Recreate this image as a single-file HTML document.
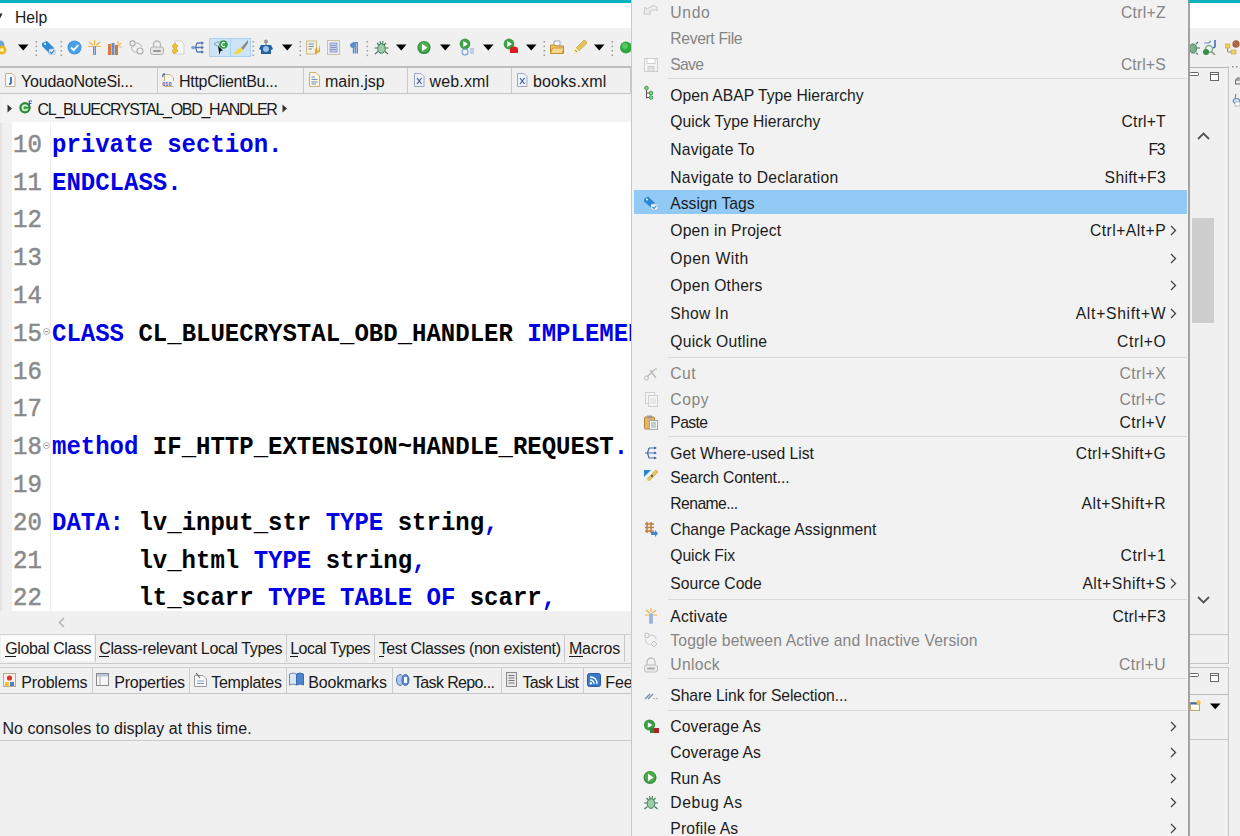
<!DOCTYPE html>
<html><head><meta charset="utf-8">
<style>
*{margin:0;padding:0;box-sizing:border-box}
html,body{width:1240px;height:836px;overflow:hidden;background:#f0f0f0;font-family:"Liberation Sans",sans-serif;color:#1a1a1a;position:relative}
.a{position:absolute}
.t{position:absolute;white-space:pre}
.m{position:absolute;white-space:pre;font-family:"Liberation Mono",monospace}
.k{color:#0000e6}
</style></head><body>

<div class="a" style="left:0px;top:0px;width:1240px;height:3px;background:#0ab3bf;"></div>
<div class="a" style="left:0px;top:3px;width:1240px;height:25px;background:#ffffff;"></div>
<svg class="a" style="left:0px;top:12px" width="6" height="8" viewBox="0 0 6 8"><path d="M-3 1.5 L2.5 1.5 L-0.25 7 Z" fill="#223"/></svg>
<div class="t" style="top:8.15px;font-size:15.7px;line-height:19.62px;color:#1a1a1a;left:15px;">Help</div>
<div class="a" style="left:0px;top:28px;width:1240px;height:38px;background:#f0f0f0;"></div>
<div class="a" style="left:209px;top:38px;width:42px;height:19px;background:#cde4f7;border:1px solid #a9d1f3"></div>
<div class="a" style="left:230px;top:38px;width:1px;height:19px;background:#a9d1f3;"></div>
<svg class="a" style="left:-6px;top:40px" width="14" height="15" viewBox="0 0 14 15"><circle cx="6" cy="5" r="4.5" fill="#6aa6d8"/><circle cx="8" cy="10" r="4.5" fill="#e8b623"/><circle cx="8" cy="10" r="2" fill="#fff3b0"/></svg>
<svg class="a" style="left:18px;top:44px" width="11" height="7" viewBox="0 0 11 7"><path d="M0 0.5 L10.5 0.5 L5.25 6.5 Z" fill="#000"/></svg>
<svg class="a" style="left:35px;top:39.5px" width="3" height="20" viewBox="0 0 3 20"><rect x="0.5" y="1.0" width="1.6" height="1.6" fill="#a0a0a0"/><rect x="0.5" y="5.5" width="1.6" height="1.6" fill="#a0a0a0"/><rect x="0.5" y="10.0" width="1.6" height="1.6" fill="#a0a0a0"/><rect x="0.5" y="14.5" width="1.6" height="1.6" fill="#a0a0a0"/></svg>
<svg class="a" style="left:41px;top:40px" width="15" height="15" viewBox="0 0 15 15"><path d="M1 3 L6 1 L13 8 L8 13 L1 6 Z" fill="#2f8bd6"/><circle cx="4" cy="4" r="1" fill="#fff"/><rect x="8" y="9" width="6" height="6" rx="1" fill="#e6eef6" stroke="#9ab" stroke-width=".6"/><path d="M9 12 L10.5 13.5 L13 10.5" stroke="#2f8bd6" stroke-width="1.2" fill="none"/></svg>
<svg class="a" style="left:60px;top:39.5px" width="3" height="20" viewBox="0 0 3 20"><rect x="0.5" y="1.0" width="1.6" height="1.6" fill="#a0a0a0"/><rect x="0.5" y="5.5" width="1.6" height="1.6" fill="#a0a0a0"/><rect x="0.5" y="10.0" width="1.6" height="1.6" fill="#a0a0a0"/><rect x="0.5" y="14.5" width="1.6" height="1.6" fill="#a0a0a0"/></svg>
<svg class="a" style="left:67px;top:40px" width="15" height="15" viewBox="0 0 15 15"><circle cx="7.5" cy="7.5" r="7" fill="#3f92dc"/><circle cx="7.5" cy="7.5" r="6.2" fill="#4aa0e6"/><path d="M4 7.5 L6.7 10.2 L11.3 5" stroke="#fff" stroke-width="1.8" fill="none"/></svg>
<svg class="a" style="left:88px;top:40px" width="13" height="15" viewBox="0 0 13 15"><path d="M6.5 0 V5 M1 2 L5 5.5 M12 2 L8 5.5 M0 6.5 H4.5 M13 6.5 H8.5" stroke="#f2b540" stroke-width="1.2"/><rect x="5" y="6" width="3" height="9" fill="#5f7fbf"/><rect x="5.8" y="6" width="1.4" height="9" fill="#a8c0e8"/></svg>
<svg class="a" style="left:108px;top:40px" width="15" height="15" viewBox="0 0 15 15"><rect x="0" y="4" width="3" height="11" fill="#d9783a"/><rect x="3.5" y="3" width="3" height="12" fill="#6b8dc8"/><rect x="7" y="5" width="3" height="10" fill="#c8793c"/><path d="M10 1 V5 M13 3 L10.5 6 M14 7 H11" stroke="#f2b540" stroke-width="1.1"/></svg>
<svg class="a" style="left:129px;top:40px" width="15" height="15" viewBox="0 0 15 15"><circle cx="3.5" cy="3.5" r="2.6" fill="none" stroke="#aaa" stroke-width="1.1"/><circle cx="11" cy="11" r="3" fill="none" stroke="#aaa" stroke-width="1.1"/><path d="M6.5 3 Q12 3 12.5 7 M2.5 7 Q2.5 12 7.5 12.5" stroke="#b5b5b5" fill="none" stroke-width="1"/></svg>
<svg class="a" style="left:150px;top:40px" width="14" height="15" viewBox="0 0 14 15"><path d="M3.5 7 V4.5 A3.5 3.5 0 0 1 10.5 4.5 V7" stroke="#b8b8b8" stroke-width="1.3" fill="none"/><rect x="0.5" y="7" width="13" height="7.5" rx="2" fill="#e6e6e6" stroke="#b0b0b0" stroke-width="1"/><rect x="3" y="10" width="8" height="2" rx="1" fill="#999"/></svg>
<svg class="a" style="left:171px;top:40px" width="14" height="15" viewBox="0 0 14 15"><path d="M4 1 H10 L13 4 V14 H4 Z" fill="#fafafa" stroke="#cfcfcf"/><path d="M1 6 L4 3 L7 6 L5 8 L7 11 L3 14 L1 11 L3 8.5 Z" fill="#f0c23a" stroke="#d49a20" stroke-width=".7"/></svg>
<svg class="a" style="left:191px;top:40px" width="14" height="15" viewBox="0 0 14 15"><path d="M6 3 H12 M1 7.5 H12 M6 12 H12 M4.5 7.5 L6 3 M4.5 7.5 L6 12" stroke="#5778b2" stroke-width="1.3" fill="none"/><path d="M10.5 1 L13 3 L10.5 5 Z M10.5 5.5 L13 7.5 L10.5 9.5 Z M10.5 10 L13 12 L10.5 14 Z" fill="#5778b2"/><circle cx="2" cy="7.5" r="1.8" fill="#7aa3d8"/></svg>
<svg class="a" style="left:213px;top:40px" width="15" height="15" viewBox="0 0 15 15"><path d="M1 4 L4 2 L8 2 L8 6 L4 6 Z" fill="none" stroke="#7a94b0" stroke-width=".9"/><path d="M5 6 L10 10.5 L7.5 11 L6.5 15 L5 6 Z" fill="#111"/><circle cx="10.5" cy="4.5" r="4.3" fill="#2a9d3e"/><path d="M12 3 A2 2 0 1 0 12 6" stroke="#fff" stroke-width="1.2" fill="none"/></svg>
<svg class="a" style="left:234px;top:40px" width="15" height="15" viewBox="0 0 15 15"><path d="M14 0 L7 8 L9 10 L14 3 Z" fill="#8b8b78"/><path d="M7 8 Q2 9 0 14 Q6 15 9 10 Z" fill="#f4d84a"/></svg>
<svg class="a" style="left:252px;top:39.5px" width="3" height="20" viewBox="0 0 3 20"><rect x="0.5" y="1.0" width="1.6" height="1.6" fill="#a0a0a0"/><rect x="0.5" y="5.5" width="1.6" height="1.6" fill="#a0a0a0"/><rect x="0.5" y="10.0" width="1.6" height="1.6" fill="#a0a0a0"/><rect x="0.5" y="14.5" width="1.6" height="1.6" fill="#a0a0a0"/></svg>
<svg class="a" style="left:259px;top:39px" width="14" height="16" viewBox="0 0 14 16"><circle cx="7" cy="2.5" r="2" fill="#999"/><rect x="6.4" y="3" width="1.2" height="3" fill="#888"/><path d="M2 6 L12 6 L14 10 L12 11 V15 H2 V11 L0 10 Z" fill="#22609e"/><circle cx="7" cy="10" r="3" fill="#9cc4ec"/></svg>
<svg class="a" style="left:282px;top:44px" width="11" height="7" viewBox="0 0 11 7"><path d="M0 0.5 L10.5 0.5 L5.25 6.5 Z" fill="#000"/></svg>
<svg class="a" style="left:299px;top:39.5px" width="3" height="20" viewBox="0 0 3 20"><rect x="0.5" y="1.0" width="1.6" height="1.6" fill="#a0a0a0"/><rect x="0.5" y="5.5" width="1.6" height="1.6" fill="#a0a0a0"/><rect x="0.5" y="10.0" width="1.6" height="1.6" fill="#a0a0a0"/><rect x="0.5" y="14.5" width="1.6" height="1.6" fill="#a0a0a0"/></svg>
<svg class="a" style="left:306px;top:40px" width="15" height="15" viewBox="0 0 15 15"><rect x="0.5" y="1" width="10" height="13" fill="#f4f0e0" stroke="#c8b98a"/><path d="M2.5 4 H8 M2.5 6.5 H8 M2.5 9 H6" stroke="#7a8ab8" stroke-width="1"/><path d="M9 14 L9 9 L11 7 L12 12 L14 4 L14 12 Z" fill="#e8a92b"/></svg>
<svg class="a" style="left:327px;top:40px" width="13" height="15" viewBox="0 0 13 15"><rect x="0.5" y="0.5" width="12" height="14" fill="#eef0f6" stroke="#c9c1a0"/><rect x="3" y="3" width="7" height="9" fill="#c6d0ea" stroke="#8190c0" stroke-width=".8"/><path d="M4 5.5 H9 M4 7.5 H9 M4 9.5 H9" stroke="#6b7cb5" stroke-width=".7"/></svg>
<svg class="a" style="left:350px;top:42px" width="8" height="12" viewBox="0 0 8 12"><path d="M3.5 11.5 V0.8 H7.5 V11.5 M5.5 0.8 V11.5" stroke="#5b8dcf" stroke-width="1.5" fill="none"/><circle cx="2.8" cy="3.3" r="2.6" fill="#5b8dcf"/></svg>
<svg class="a" style="left:366px;top:39.5px" width="3" height="20" viewBox="0 0 3 20"><rect x="0.5" y="1.0" width="1.6" height="1.6" fill="#a0a0a0"/><rect x="0.5" y="5.5" width="1.6" height="1.6" fill="#a0a0a0"/><rect x="0.5" y="10.0" width="1.6" height="1.6" fill="#a0a0a0"/><rect x="0.5" y="14.5" width="1.6" height="1.6" fill="#a0a0a0"/></svg>
<svg class="a" style="left:374px;top:40px" width="15" height="15" viewBox="0 0 15 15"><ellipse cx="7.5" cy="8.5" rx="3.8" ry="4.8" fill="#9ccca8" stroke="#3f7a57" stroke-width="1"/><path d="M3 3 L5 5 M12 3 L10 5 M0.5 8 H3.5 M11.5 8 H14.5 M1 14 L4 11.5 M14 14 L11 11.5 M6 1 L6.5 4 M9 1 L8.5 4" stroke="#3f7a57" stroke-width="1.1"/></svg>
<svg class="a" style="left:396px;top:44px" width="11" height="7" viewBox="0 0 11 7"><path d="M0 0.5 L10.5 0.5 L5.25 6.5 Z" fill="#000"/></svg>
<svg class="a" style="left:417px;top:40px" width="14" height="15" viewBox="0 0 14 15"><circle cx="7" cy="7.5" r="6.6" fill="#2e8b3a"/><circle cx="7" cy="7" r="5.5" fill="#4aac4a"/><path d="M5 3.8 L10.5 7.5 L5 11.2 Z" fill="#fff"/></svg>
<svg class="a" style="left:440px;top:44px" width="11" height="7" viewBox="0 0 11 7"><path d="M0 0.5 L10.5 0.5 L5.25 6.5 Z" fill="#000"/></svg>
<svg class="a" style="left:459px;top:38px" width="16" height="18" viewBox="0 0 16 18"><circle cx="6" cy="6" r="5.4" fill="#3f9e46"/><path d="M4.3 3 L9 6 L4.3 9 Z" fill="#fff"/><circle cx="6" cy="14" r="3" fill="none" stroke="#6f9fd8" stroke-width="1.1"/><path d="M11 11 H15 M11 13 H15 M11 15 H15" stroke="#8aaed8" stroke-width="1"/></svg>
<svg class="a" style="left:483px;top:44px" width="11" height="7" viewBox="0 0 11 7"><path d="M0 0.5 L10.5 0.5 L5.25 6.5 Z" fill="#000"/></svg>
<svg class="a" style="left:503px;top:38px" width="15" height="17" viewBox="0 0 15 17"><circle cx="6" cy="6" r="5.4" fill="#3f9e46"/><path d="M4.3 3 L9 6 L4.3 9 Z" fill="#fff"/><path d="M7 11 Q7 8.5 11 8.5 Q15 8.5 15 11 V15 H7 Z" fill="#d82020"/></svg>
<svg class="a" style="left:526px;top:44px" width="11" height="7" viewBox="0 0 11 7"><path d="M0 0.5 L10.5 0.5 L5.25 6.5 Z" fill="#000"/></svg>
<svg class="a" style="left:543px;top:39.5px" width="3" height="20" viewBox="0 0 3 20"><rect x="0.5" y="1.0" width="1.6" height="1.6" fill="#a0a0a0"/><rect x="0.5" y="5.5" width="1.6" height="1.6" fill="#a0a0a0"/><rect x="0.5" y="10.0" width="1.6" height="1.6" fill="#a0a0a0"/><rect x="0.5" y="14.5" width="1.6" height="1.6" fill="#a0a0a0"/></svg>
<svg class="a" style="left:550px;top:40px" width="14" height="15" viewBox="0 0 14 15"><path d="M4 1 H10 V6 H4 Z" fill="#fff" stroke="#7a94b0" stroke-width=".8"/><path d="M0.5 5 H5 L6 6 H13.5 V13.5 H0.5 Z" fill="#f4c56a" stroke="#c18a2a"/><path d="M0.5 13.5 L2.5 8 H14 L12 13.5 Z" fill="#f9d98f" stroke="#c18a2a" stroke-width=".8"/></svg>
<svg class="a" style="left:572px;top:40px" width="15" height="15" viewBox="0 0 15 15"><path d="M14 1 L12 0 L4 8 L7 11 L15 3 Z" fill="#e5c35b" stroke="#b89a3a" stroke-width=".6"/><path d="M4 8 L1 11 L4 14 L7 11 Z" fill="#f5f0a0"/><path d="M3 10 L5 12" stroke="#888" stroke-width="1"/></svg>
<svg class="a" style="left:594px;top:44px" width="11" height="7" viewBox="0 0 11 7"><path d="M0 0.5 L10.5 0.5 L5.25 6.5 Z" fill="#000"/></svg>
<svg class="a" style="left:611px;top:39.5px" width="3" height="20" viewBox="0 0 3 20"><rect x="0.5" y="1.0" width="1.6" height="1.6" fill="#a0a0a0"/><rect x="0.5" y="5.5" width="1.6" height="1.6" fill="#a0a0a0"/><rect x="0.5" y="10.0" width="1.6" height="1.6" fill="#a0a0a0"/><rect x="0.5" y="14.5" width="1.6" height="1.6" fill="#a0a0a0"/></svg>
<svg class="a" style="left:619px;top:40px" width="13" height="15" viewBox="0 0 13 15"><circle cx="7" cy="7.5" r="6" fill="#2fa83f"/><circle cx="6" cy="6" r="3" fill="#55c763"/></svg>
<svg class="a" style="left:1190px;top:40px" width="10" height="15" viewBox="0 0 10 15"><ellipse cx="3" cy="8.5" rx="3.5" ry="4.5" fill="#7db08a" stroke="#3f7a57"/><path d="M7 8 H10 M6 4 L8 2 M6 13 L8 14.5" stroke="#3f7a57" stroke-width="1.1"/></svg>
<svg class="a" style="left:1203px;top:40px" width="14" height="15" viewBox="0 0 14 15"><path d="M1 3 H6 L8 1" stroke="#6b8cc8" stroke-width="1.2" fill="none"/><path d="M12 0 V6 Q12 8 9 8" stroke="#3f6fc0" stroke-width="1.6" fill="none"/><circle cx="6" cy="9" r="3.5" fill="none" stroke="#8a8" stroke-width="1.4"/><path d="M8.5 11.5 L12 15" stroke="#9a8a8a" stroke-width="1.6"/><circle cx="3" cy="12" r="3" fill="#2f8f4a"/></svg>
<svg class="a" style="left:1225px;top:40px" width="15" height="15" viewBox="0 0 15 15"><rect x="0" y="4" width="5" height="4" fill="#f0d060" stroke="#c8a030" stroke-width=".6"/><rect x="6" y="10" width="5" height="4" fill="#f0d060" stroke="#c8a030" stroke-width=".6"/><path d="M2.5 8 V12 H6" stroke="#888" fill="none"/><ellipse cx="11" cy="4" rx="3.6" ry="3.8" fill="#a5613a"/><path d="M9 2 Q11 4 13 6" stroke="#d89a70" stroke-width=".8" fill="none"/></svg>
<div class="a" style="left:0px;top:66px;width:631px;height:28px;background:#f0f0f0;border-top:2px solid #bdbdbd;border-bottom:1px solid #c6c6c6"></div>
<div class="a" style="left:157px;top:68px;width:1px;height:25px;background:#c9c9c9;"></div>
<div class="a" style="left:303px;top:68px;width:1px;height:25px;background:#c9c9c9;"></div>
<div class="a" style="left:407px;top:68px;width:1px;height:25px;background:#c9c9c9;"></div>
<div class="a" style="left:511px;top:68px;width:1px;height:25px;background:#c9c9c9;"></div>
<div class="a" style="left:630px;top:68px;width:1px;height:25px;background:#c9c9c9;"></div>
<svg class="a" style="left:5px;top:73px" width="11" height="14" viewBox="0 0 11 14"><path d="M0.5 0.5 H7 L10 3.5 V13.5 H0.5 Z" fill="#f7f7f7" stroke="#c4b48a"/><path d="M6 4 V9.5 Q6 11 4 11" stroke="#2a5aa8" stroke-width="1.6" fill="none"/></svg>
<div class="t" style="top:72.36px;font-size:16px;line-height:20.0px;color:#1a1a1a;left:21px;letter-spacing:-0.200px;">YoudaoNoteSi...</div>
<svg class="a" style="left:161px;top:73px" width="15" height="14" viewBox="0 0 15 14"><path d="M3.5 1.5 H9 L12.5 5 V13.5 H3.5 Z" fill="#fbf8ee" stroke="#c9b27a"/><path d="M4 1 Q1 1 2 4" stroke="#3a6ab0" stroke-width="1.3" fill="none"/><rect x="1" y="8" width="13" height="5" fill="#eef2fa"/><text x="1.3" y="12.8" font-size="5.5" font-weight="bold" font-family="Liberation Sans" fill="#2a5aa8">010</text></svg>
<div class="t" style="top:72.36px;font-size:16px;line-height:20.0px;color:#1a1a1a;left:179px;letter-spacing:-0.300px;">HttpClientBu...</div>
<svg class="a" style="left:309px;top:72px" width="11" height="15" viewBox="0 0 11 15"><path d="M0.5 0.5 H7 L10.5 4 V14.5 H0.5 Z" fill="#fbf6e0" stroke="#c9b27a"/><path d="M2.5 5 H6 M2.5 7.5 H8.5 M2.5 10 H8.5 M2.5 12 H7" stroke="#6f8fc8" stroke-width="1"/></svg>
<div class="t" style="top:72.36px;font-size:16px;line-height:20.0px;color:#1a1a1a;left:325px;">main.jsp</div>
<svg class="a" style="left:414px;top:73px" width="11" height="14" viewBox="0 0 11 14"><path d="M0.5 0.5 H7 L10 3.5 V13.5 H0.5 Z" fill="#eef2fa" stroke="#9aa8c8"/><path d="M3 5 L7.5 11 M7.5 5 L3 11" stroke="#3a5a9a" stroke-width="1.2"/></svg>
<div class="t" style="top:72.36px;font-size:16px;line-height:20.0px;color:#1a1a1a;left:429.5px;letter-spacing:0.150px;">web.xml</div>
<svg class="a" style="left:517px;top:73px" width="11" height="14" viewBox="0 0 11 14"><path d="M0.5 0.5 H7 L10 3.5 V13.5 H0.5 Z" fill="#eef2fa" stroke="#9aa8c8"/><path d="M3 5 L7.5 11 M7.5 5 L3 11" stroke="#3a5a9a" stroke-width="1.2"/></svg>
<div class="t" style="top:72.36px;font-size:16px;line-height:20.0px;color:#1a1a1a;left:533px;letter-spacing:0.150px;">books.xml</div>
<div class="a" style="left:0px;top:94px;width:631px;height:29px;background:#f0f0f0;"></div>
<div class="a" style="left:2px;top:95px;width:629px;height:28px;background:#f3f3f3;"></div>
<svg class="a" style="left:7px;top:104px" width="6" height="9" viewBox="0 0 6 9"><path d="M0.5 0.5 L5 4.5 L0.5 8.5 Z" fill="#333"/></svg>
<svg class="a" style="left:19px;top:100px" width="14" height="14" viewBox="0 0 14 14"><circle cx="6" cy="7.8" r="4.6" fill="#c8f0c8" stroke="#2a8a3a" stroke-width="2.2"/><circle cx="6" cy="7.8" r="1.5" fill="#3a9a4a"/><rect x="7" y="6.8" width="4" height="1.6" fill="#2a8a3a"/><path d="M10.3 6 V1 H13 M10.3 3.5 H12.5" stroke="#3a5aa8" stroke-width="1.2" fill="none"/></svg>
<div class="t" style="top:100.36px;font-size:16px;line-height:20.0px;color:#1a1a1a;left:37.5px;letter-spacing:-1.280px;">CL_BLUECRYSTAL_OBD_HANDLER</div>
<svg class="a" style="left:282px;top:104px" width="6" height="9" viewBox="0 0 6 9"><path d="M0.5 0.5 L5 4.5 L0.5 8.5 Z" fill="#333"/></svg>
<div class="a" style="left:0px;top:123px;width:12px;height:510px;background:#f0f0f0;"></div>
<div class="a" style="left:0px;top:123px;width:2px;height:510px;background:#e4e4e4;"></div>
<div class="a" style="left:12px;top:122px;width:619px;height:489px;background:#ffffff;"></div>
<div class="a" style="left:50px;top:122px;width:1px;height:489px;background:#f0f0f0;"></div>
<div class="m" style="left:13px;top:131.81px;font-size:24px;line-height:28px;color:#8a8a8a;-webkit-text-stroke:0.5px #8a8a8a;transform:scaleY(1.09);transform-origin:0 20.39px;">10</div>
<div class="m" style="left:52px;top:131.81px;font-size:24px;line-height:28px;color:#000;font-weight:bold;transform:scaleY(1.09);transform-origin:0 20.39px;"><span class="k">private section.</span></div>
<div class="m" style="left:13px;top:169.61px;font-size:24px;line-height:28px;color:#8a8a8a;-webkit-text-stroke:0.5px #8a8a8a;transform:scaleY(1.09);transform-origin:0 20.39px;">11</div>
<div class="m" style="left:52px;top:169.61px;font-size:24px;line-height:28px;color:#000;font-weight:bold;transform:scaleY(1.09);transform-origin:0 20.39px;"><span class="k">ENDCLASS.</span></div>
<div class="m" style="left:13px;top:207.41px;font-size:24px;line-height:28px;color:#8a8a8a;-webkit-text-stroke:0.5px #8a8a8a;transform:scaleY(1.09);transform-origin:0 20.39px;">12</div>
<div class="m" style="left:13px;top:245.21px;font-size:24px;line-height:28px;color:#8a8a8a;-webkit-text-stroke:0.5px #8a8a8a;transform:scaleY(1.09);transform-origin:0 20.39px;">13</div>
<div class="m" style="left:13px;top:283.01px;font-size:24px;line-height:28px;color:#8a8a8a;-webkit-text-stroke:0.5px #8a8a8a;transform:scaleY(1.09);transform-origin:0 20.39px;">14</div>
<div class="m" style="left:13px;top:320.81px;font-size:24px;line-height:28px;color:#8a8a8a;-webkit-text-stroke:0.5px #8a8a8a;transform:scaleY(1.09);transform-origin:0 20.39px;">15</div>
<div class="m" style="left:52px;top:320.81px;font-size:24px;line-height:28px;color:#000;font-weight:bold;transform:scaleY(1.09);transform-origin:0 20.39px;"><span class="k">CLASS</span> CL_BLUECRYSTAL_OBD_HANDLER <span class="k">IMPLEMENTATION.</span></div>
<div class="m" style="left:13px;top:358.61px;font-size:24px;line-height:28px;color:#8a8a8a;-webkit-text-stroke:0.5px #8a8a8a;transform:scaleY(1.09);transform-origin:0 20.39px;">16</div>
<div class="m" style="left:13px;top:396.41px;font-size:24px;line-height:28px;color:#8a8a8a;-webkit-text-stroke:0.5px #8a8a8a;transform:scaleY(1.09);transform-origin:0 20.39px;">17</div>
<div class="m" style="left:13px;top:434.21px;font-size:24px;line-height:28px;color:#8a8a8a;-webkit-text-stroke:0.5px #8a8a8a;transform:scaleY(1.09);transform-origin:0 20.39px;">18</div>
<div class="m" style="left:52px;top:434.21px;font-size:24px;line-height:28px;color:#000;font-weight:bold;transform:scaleY(1.09);transform-origin:0 20.39px;"><span class="k">method</span> IF_HTTP_EXTENSION~HANDLE_REQUEST<span class="k">.</span></div>
<div class="m" style="left:13px;top:472.01px;font-size:24px;line-height:28px;color:#8a8a8a;-webkit-text-stroke:0.5px #8a8a8a;transform:scaleY(1.09);transform-origin:0 20.39px;">19</div>
<div class="m" style="left:13px;top:509.81px;font-size:24px;line-height:28px;color:#8a8a8a;-webkit-text-stroke:0.5px #8a8a8a;transform:scaleY(1.09);transform-origin:0 20.39px;">20</div>
<div class="m" style="left:52px;top:509.81px;font-size:24px;line-height:28px;color:#000;font-weight:bold;transform:scaleY(1.09);transform-origin:0 20.39px;"><span class="k">DATA:</span> lv_input_str <span class="k">TYPE</span> string<span class="k">,</span></div>
<div class="m" style="left:13px;top:547.61px;font-size:24px;line-height:28px;color:#8a8a8a;-webkit-text-stroke:0.5px #8a8a8a;transform:scaleY(1.09);transform-origin:0 20.39px;">21</div>
<div class="m" style="left:52px;top:547.61px;font-size:24px;line-height:28px;color:#000;font-weight:bold;transform:scaleY(1.09);transform-origin:0 20.39px;">      lv_html <span class="k">TYPE</span> string<span class="k">,</span></div>
<div class="m" style="left:13px;top:585.41px;font-size:24px;line-height:28px;color:#8a8a8a;-webkit-text-stroke:0.5px #8a8a8a;transform:scaleY(1.09);transform-origin:0 20.39px;">22</div>
<div class="m" style="left:52px;top:585.41px;font-size:24px;line-height:28px;color:#000;font-weight:bold;transform:scaleY(1.09);transform-origin:0 20.39px;">      lt_scarr <span class="k">TYPE</span> <span class="k">TABLE</span> <span class="k">OF</span> scarr<span class="k">,</span></div>
<svg class="a" style="left:43px;top:328.3px" width="8" height="8" viewBox="0 0 8 8"><circle cx="3.5" cy="3.5" r="3" fill="#fff" stroke="#9a9a9a" stroke-width=".8"/><path d="M1.8 3.5 H5.2" stroke="#777" stroke-width=".8"/></svg>
<svg class="a" style="left:43px;top:441.7px" width="8" height="8" viewBox="0 0 8 8"><circle cx="3.5" cy="3.5" r="3" fill="#fff" stroke="#9a9a9a" stroke-width=".8"/><path d="M1.8 3.5 H5.2" stroke="#777" stroke-width=".8"/></svg>
<div class="a" style="left:0px;top:611px;width:631px;height:22px;background:#f0f0f0;"></div>
<svg class="a" style="left:58px;top:617px" width="8" height="11" viewBox="0 0 8 11"><path d="M6 1 L1.5 5.5 L6 10" stroke="#b5b5b5" stroke-width="1.6" fill="none"/></svg>
<div class="a" style="left:0px;top:633px;width:631px;height:30px;background:#f0f0f0;"></div>
<div class="a" style="left:0px;top:634px;width:631px;height:1px;background:#cfcfcf;"></div>
<div class="a" style="left:0px;top:662.5px;width:631px;height:1.5px;background:#cbcbcb;"></div>
<div class="a" style="left:1px;top:635px;width:93px;height:26px;background:#fbfbfb;"></div>
<div class="a" style="left:95px;top:635px;width:1px;height:27px;background:#c9c9c9;"></div>
<div class="a" style="left:285.5px;top:635px;width:1px;height:27px;background:#c9c9c9;"></div>
<div class="a" style="left:374.4px;top:635px;width:1px;height:27px;background:#c9c9c9;"></div>
<div class="a" style="left:564px;top:635px;width:1px;height:27px;background:#c9c9c9;"></div>
<div class="a" style="left:624px;top:635px;width:1px;height:27px;background:#c9c9c9;"></div>
<div class="a" style="left:0px;top:667px;width:631px;height:27px;background:#f0f0f0;border-top:1px solid #cfcfcf;border-bottom:1px solid #c6c6c6"></div>
<div class="a" style="left:92px;top:668px;width:1px;height:25px;background:#cbcbcb;"></div>
<div class="a" style="left:189.2px;top:668px;width:1px;height:25px;background:#cbcbcb;"></div>
<div class="a" style="left:285.5px;top:668px;width:1px;height:25px;background:#cbcbcb;"></div>
<div class="a" style="left:391.8px;top:668px;width:1px;height:25px;background:#cbcbcb;"></div>
<div class="a" style="left:500.7px;top:668px;width:1px;height:25px;background:#cbcbcb;"></div>
<div class="a" style="left:583.4px;top:668px;width:1px;height:25px;background:#cbcbcb;"></div>
<svg class="a" style="left:3px;top:673px" width="13" height="14" viewBox="0 0 13 14"><rect x="0.5" y="0.5" width="12" height="13" fill="#f6f2ea" stroke="#b9aa88"/><circle cx="6.5" cy="5" r="2.6" fill="#d33"/><rect x="2" y="9" width="4" height="4" fill="#f2c230"/><rect x="7" y="9" width="4" height="4" fill="#4a7ad0"/></svg>
<svg class="a" style="left:96px;top:673px" width="13" height="13" viewBox="0 0 13 13"><rect x="0.5" y="0.5" width="12" height="12" fill="#f7f7f7" stroke="#8a8a8a"/><rect x="1" y="1" width="11" height="2.5" fill="#b8c4d8"/><path d="M4 3.5 V12" stroke="#aaa"/></svg>
<svg class="a" style="left:194px;top:673px" width="13" height="14" viewBox="0 0 13 14"><path d="M0.5 2.5 H9 L12.5 6 V13.5 H0.5 Z" fill="#fafafa" stroke="#9a9a9a"/><path d="M2 0 L6 5" stroke="#666" stroke-width="1.2"/><path d="M3 8 H10 M3 10.5 H10" stroke="#7a9ad8"/></svg>
<svg class="a" style="left:289px;top:672px" width="15" height="14" viewBox="0 0 15 14"><path d="M0.5 2 Q4 0 7.5 2 V13 Q4 11 0.5 13 Z" fill="#d8e6f6" stroke="#6a8ac0"/><path d="M7.5 2 Q11 0 14.5 2 V13 Q11 11 7.5 13 Z" fill="#4a86d0" stroke="#3a6ab0"/></svg>
<svg class="a" style="left:396px;top:673px" width="14" height="13" viewBox="0 0 14 13"><ellipse cx="4" cy="7" rx="3.5" ry="5.5" fill="#a8c8ee" stroke="#4a7ac0"/><ellipse cx="9.5" cy="7" rx="3.5" ry="5.5" fill="#5a8ed6" stroke="#3a6ab0"/><rect x="8" y="4" width="3" height="6" fill="#fff"/></svg>
<svg class="a" style="left:506px;top:672px" width="11" height="15" viewBox="0 0 11 15"><rect x="0.5" y="0.5" width="10" height="14" fill="#e8e8e8" stroke="#8a8a8a"/><path d="M2.5 3.5 H8.5 M2.5 6 H8.5 M2.5 8.5 H8.5 M2.5 11 H8.5" stroke="#777"/></svg>
<svg class="a" style="left:587px;top:673px" width="14" height="14" viewBox="0 0 14 14"><rect x="0.5" y="0.5" width="13" height="13" rx="2" fill="#3a78c8" stroke="#2a5aa0"/><path d="M3 4 Q10 4 10 11 M3 7 Q7 7 7 11" stroke="#fff" stroke-width="1.3" fill="none"/><circle cx="3.8" cy="10.2" r="1.2" fill="#fff"/></svg>
<div class="a" style="left:0px;top:694px;width:631px;height:46px;background:#f0f0f0;"></div>
<div class="a" style="left:0px;top:740px;width:631px;height:1px;background:#c9c9c9;"></div>
<div class="a" style="left:0px;top:741px;width:631px;height:95px;background:#f0f0f0;"></div>
<div class="t" style="top:639.06px;font-size:16px;line-height:20.0px;color:#1a1a1a;left:5.3px;letter-spacing:-0.409px;">Global Class</div>
<div class="t" style="top:639.06px;font-size:16px;line-height:20.0px;color:#1a1a1a;left:99.2px;letter-spacing:-0.336px;">Class-relevant Local Types</div>
<div class="t" style="top:639.06px;font-size:16px;line-height:20.0px;color:#1a1a1a;left:290.2px;letter-spacing:-0.469px;">Local Types</div>
<div class="t" style="top:639.06px;font-size:16px;line-height:20.0px;color:#1a1a1a;left:378.7px;letter-spacing:-0.376px;">Test Classes (non existent)</div>
<div class="t" style="top:639.06px;font-size:16px;line-height:20.0px;color:#1a1a1a;left:568.9px;letter-spacing:-0.211px;">Macros</div>
<div class="a" style="left:5.3px;top:656px;width:10.7px;height:1px;background:#1b1b1b;"></div>
<div class="a" style="left:99.2px;top:656px;width:9.7px;height:1px;background:#1b1b1b;"></div>
<div class="a" style="left:290.2px;top:656px;width:7.8px;height:1px;background:#1b1b1b;"></div>
<div class="a" style="left:378.7px;top:656px;width:5.8px;height:1px;background:#1b1b1b;"></div>
<div class="a" style="left:569px;top:656px;width:13.5px;height:1px;background:#1b1b1b;"></div>
<div class="t" style="top:673.36px;font-size:16px;line-height:20.0px;color:#1a1a1a;left:21.3px;letter-spacing:-0.183px;">Problems</div>
<div class="t" style="top:673.36px;font-size:16px;line-height:20.0px;color:#1a1a1a;left:114.2px;letter-spacing:-0.225px;">Properties</div>
<div class="t" style="top:673.36px;font-size:16px;line-height:20.0px;color:#1a1a1a;left:211.2px;letter-spacing:-0.278px;">Templates</div>
<div class="t" style="top:673.36px;font-size:16px;line-height:20.0px;color:#1a1a1a;left:308.2px;letter-spacing:-0.166px;">Bookmarks</div>
<div class="t" style="top:673.36px;font-size:16px;line-height:20.0px;color:#1a1a1a;left:413px;letter-spacing:-0.640px;">Task Repo...</div>
<div class="t" style="top:673.36px;font-size:16px;line-height:20.0px;color:#1a1a1a;left:522.5px;letter-spacing:-0.719px;">Task List</div>
<div class="t" style="top:673.36px;font-size:16px;line-height:20.0px;color:#1a1a1a;left:605.2px;">Feeds</div>
<div class="t" style="top:718.96px;font-size:16px;line-height:20.0px;color:#1a1a1a;left:2.4px;letter-spacing:0.082px;">No consoles to display at this time.</div>
<div class="a" style="left:1190px;top:66px;width:50px;height:770px;background:#f0f0f0;"></div>
<div class="a" style="left:1190px;top:66.5px;width:39px;height:1.5px;background:#b4b4b4;"></div>
<div class="a" style="left:1228px;top:66px;width:1px;height:598px;background:#c4c4c4;"></div>
<div class="a" style="left:1190px;top:92.5px;width:38px;height:1.5px;background:#b8b8b8;"></div>
<svg class="a" style="left:1189px;top:72px" width="10" height="4" viewBox="0 0 10 4"><rect x="0.5" y="0.5" width="9" height="3" rx="1" fill="#fff" stroke="#666"/></svg>
<svg class="a" style="left:1210px;top:72px" width="9" height="9" viewBox="0 0 9 9"><rect x="0.5" y="0.5" width="8" height="8" fill="#fff" stroke="#666"/><path d="M0.5 2.5 H8.5" stroke="#666"/></svg>
<div class="a" style="left:1190px;top:93px;width:38px;height:541px;background:#f0f0f0;"></div>
<svg class="a" style="left:1197px;top:132px" width="13" height="8" viewBox="0 0 13 8"><path d="M1 7 L6.5 1.5 L12 7" stroke="#555" stroke-width="1.8" fill="none"/></svg>
<div class="a" style="left:1192px;top:218px;width:22px;height:105px;background:#cdcdcd;"></div>
<svg class="a" style="left:1197px;top:596px" width="13" height="8" viewBox="0 0 13 8"><path d="M1 1 L6.5 6.5 L12 1" stroke="#555" stroke-width="1.8" fill="none"/></svg>
<div class="a" style="left:1190px;top:634px;width:38px;height:1px;background:#c4c4c4;"></div>
<div class="a" style="left:1190px;top:663px;width:38px;height:1px;background:#c4c4c4;"></div>
<div class="a" style="left:1190px;top:667px;width:39px;height:1px;background:#c4c4c4;"></div>
<div class="a" style="left:1228px;top:667px;width:1px;height:169px;background:#c4c4c4;"></div>
<svg class="a" style="left:1189px;top:673px" width="10" height="4" viewBox="0 0 10 4"><rect x="0.5" y="0.5" width="9" height="3" rx="1" fill="#fff" stroke="#666"/></svg>
<svg class="a" style="left:1210px;top:673px" width="9" height="9" viewBox="0 0 9 9"><rect x="0.5" y="0.5" width="8" height="8" fill="#fff" stroke="#666"/><path d="M0.5 2.5 H8.5" stroke="#666"/></svg>
<div class="a" style="left:1190px;top:693.5px;width:38px;height:1.5px;background:#bdbdbd;"></div>
<svg class="a" style="left:1190px;top:700px" width="11" height="11" viewBox="0 0 11 11"><rect x="0.5" y="2.5" width="9" height="8" fill="#fffbe8" stroke="#b8a878"/><rect x="0.5" y="2.5" width="9" height="2" fill="#3a6ab0"/><circle cx="8.5" cy="2.5" r="2.2" fill="#f2c050"/></svg>
<svg class="a" style="left:1210px;top:703px" width="11" height="7" viewBox="0 0 11 7"><path d="M0 0.5 L10.5 0.5 L5.25 6.3 Z" fill="#000"/></svg>
<div class="a" style="left:1190px;top:739px;width:38px;height:1px;background:#c4c4c4;"></div>
<svg class="a" style="left:1232px;top:66px" width="8" height="3" viewBox="0 0 8 3"><rect x="0" y="0" width="1.5" height="1.5" fill="#888"/><rect x="4" y="0" width="1.5" height="1.5" fill="#888"/></svg>
<svg class="a" style="left:1235px;top:77px" width="6" height="8" viewBox="0 0 6 8"><rect x="0.5" y="3" width="6" height="4" fill="#eee" stroke="#666"/><path d="M2 3 V1 H6" stroke="#666" fill="none"/></svg>
<svg class="a" style="left:1232px;top:93px" width="8" height="14" viewBox="0 0 8 14"><path d="M4 1 L3 6" stroke="#777"/><ellipse cx="4.5" cy="8" rx="3.5" ry="2.5" fill="#cfe0f4" stroke="#5a7ab0"/><rect x="3" y="9" width="5" height="4" fill="#fff" stroke="#999" stroke-width=".6"/></svg>
<div class="a" style="left:631px;top:0px;width:557px;height:836px;background:#f2f2f2;border-left:1px solid #c8c8c8"></div>
<div class="a" style="left:1188px;top:0px;width:2px;height:836px;background:#8f8f8f;opacity:.8"></div>
<div class="a" style="left:633.5px;top:190px;width:553px;height:24.3px;background:#91c9f7;"></div>
<div class="a" style="left:668px;top:78px;width:519px;height:1px;background:#d9d9d9;"></div>
<div class="a" style="left:668px;top:357px;width:519px;height:1px;background:#d9d9d9;"></div>
<div class="a" style="left:668px;top:436px;width:519px;height:1px;background:#d9d9d9;"></div>
<div class="a" style="left:668px;top:599px;width:519px;height:1px;background:#d9d9d9;"></div>
<div class="a" style="left:668px;top:678px;width:519px;height:1px;background:#d9d9d9;"></div>
<div class="a" style="left:668px;top:710px;width:519px;height:1px;background:#d9d9d9;"></div>
<div class="t" style="top:3.45px;font-size:15.7px;line-height:19.62px;color:#858585;left:670.3px;letter-spacing:0.661px;">Undo</div>
<div class="t" style="top:3.45px;font-size:15.7px;line-height:19.62px;color:#858585;right:74.09px;letter-spacing:0.312px;">Ctrl+Z</div>
<div class="t" style="top:29.35px;font-size:15.7px;line-height:19.62px;color:#858585;left:670.3px;letter-spacing:-0.354px;">Revert File</div>
<div class="t" style="top:55.35px;font-size:15.7px;line-height:19.62px;color:#858585;left:670.3px;letter-spacing:-0.689px;">Save</div>
<div class="t" style="top:55.35px;font-size:15.7px;line-height:19.62px;color:#858585;right:74.27px;letter-spacing:0.134px;">Ctrl+S</div>
<div class="t" style="top:86.25px;font-size:15.7px;line-height:19.62px;color:#1b1b1b;left:670.3px;letter-spacing:0.017px;">Open ABAP Type Hierarchy</div>
<div class="t" style="top:111.85px;font-size:15.7px;line-height:19.62px;color:#1b1b1b;left:670.3px;letter-spacing:0.017px;">Quick Type Hierarchy</div>
<div class="t" style="top:111.85px;font-size:15.7px;line-height:19.62px;color:#1b1b1b;right:74.23px;letter-spacing:0.172px;">Ctrl+T</div>
<div class="t" style="top:139.85px;font-size:15.7px;line-height:19.62px;color:#1b1b1b;left:670.3px;letter-spacing:0.164px;">Navigate To</div>
<div class="t" style="top:139.85px;font-size:15.7px;line-height:19.62px;color:#1b1b1b;right:75.61px;letter-spacing:-1.212px;">F3</div>
<div class="t" style="top:167.55px;font-size:15.7px;line-height:19.62px;color:#1b1b1b;left:670.3px;letter-spacing:0.219px;">Navigate to Declaration</div>
<div class="t" style="top:167.55px;font-size:15.7px;line-height:19.62px;color:#1b1b1b;right:74.09px;letter-spacing:0.306px;">Shift+F3</div>
<div class="t" style="top:193.75px;font-size:15.7px;line-height:19.62px;color:#1b1b1b;left:670.3px;letter-spacing:-0.010px;">Assign Tags</div>
<div class="t" style="top:220.65px;font-size:15.7px;line-height:19.62px;color:#1b1b1b;left:670.3px;letter-spacing:0.190px;">Open in Project</div>
<div class="t" style="top:220.65px;font-size:15.7px;line-height:19.62px;color:#1b1b1b;right:73.94px;letter-spacing:0.456px;">Ctrl+Alt+P</div>
<svg class="a" style="left:1170px;top:224.5px" width="7" height="11" viewBox="0 0 7 11"><path d="M1 1 L5.5 5.5 L1 10" stroke="#444" stroke-width="1.3" fill="none"/></svg>
<div class="t" style="top:248.65px;font-size:15.7px;line-height:19.62px;color:#1b1b1b;left:670.3px;letter-spacing:0.472px;">Open With</div>
<svg class="a" style="left:1170px;top:252.5px" width="7" height="11" viewBox="0 0 7 11"><path d="M1 1 L5.5 5.5 L1 10" stroke="#444" stroke-width="1.3" fill="none"/></svg>
<div class="t" style="top:276.35px;font-size:15.7px;line-height:19.62px;color:#1b1b1b;left:670.3px;letter-spacing:0.229px;">Open Others</div>
<svg class="a" style="left:1170px;top:280.2px" width="7" height="11" viewBox="0 0 7 11"><path d="M1 1 L5.5 5.5 L1 10" stroke="#444" stroke-width="1.3" fill="none"/></svg>
<div class="t" style="top:304.15px;font-size:15.7px;line-height:19.62px;color:#1b1b1b;left:670.3px;letter-spacing:0.235px;">Show In</div>
<div class="t" style="top:304.15px;font-size:15.7px;line-height:19.62px;color:#1b1b1b;right:73.69px;letter-spacing:0.707px;">Alt+Shift+W</div>
<svg class="a" style="left:1170px;top:308.0px" width="7" height="11" viewBox="0 0 7 11"><path d="M1 1 L5.5 5.5 L1 10" stroke="#444" stroke-width="1.3" fill="none"/></svg>
<div class="t" style="top:331.85px;font-size:15.7px;line-height:19.62px;color:#1b1b1b;left:670.3px;letter-spacing:0.219px;">Quick Outline</div>
<div class="t" style="top:331.85px;font-size:15.7px;line-height:19.62px;color:#1b1b1b;right:73.85px;letter-spacing:0.547px;">Ctrl+O</div>
<div class="t" style="top:364.45px;font-size:15.7px;line-height:19.62px;color:#858585;left:670.3px;letter-spacing:0.389px;">Cut</div>
<div class="t" style="top:364.45px;font-size:15.7px;line-height:19.62px;color:#858585;right:74.01px;letter-spacing:0.394px;">Ctrl+X</div>
<div class="t" style="top:389.55px;font-size:15.7px;line-height:19.62px;color:#858585;left:670.3px;letter-spacing:0.592px;">Copy</div>
<div class="t" style="top:389.55px;font-size:15.7px;line-height:19.62px;color:#858585;right:74.18px;letter-spacing:0.222px;">Ctrl+C</div>
<div class="t" style="top:412.55px;font-size:15.7px;line-height:19.62px;color:#1b1b1b;left:670.3px;letter-spacing:-0.631px;">Paste</div>
<div class="t" style="top:412.55px;font-size:15.7px;line-height:19.62px;color:#1b1b1b;right:74.01px;letter-spacing:0.394px;">Ctrl+V</div>
<div class="t" style="top:443.75px;font-size:15.7px;line-height:19.62px;color:#1b1b1b;left:670.3px;letter-spacing:-0.010px;">Get Where-used List</div>
<div class="t" style="top:443.75px;font-size:15.7px;line-height:19.62px;color:#1b1b1b;right:74.08px;letter-spacing:0.317px;">Ctrl+Shift+G</div>
<div class="t" style="top:468.05px;font-size:15.7px;line-height:19.62px;color:#1b1b1b;left:670.3px;letter-spacing:-0.181px;">Search Content...</div>
<div class="t" style="top:493.85px;font-size:15.7px;line-height:19.62px;color:#1b1b1b;left:670.3px;letter-spacing:-0.559px;">Rename...</div>
<div class="t" style="top:493.85px;font-size:15.7px;line-height:19.62px;color:#1b1b1b;right:73.93px;letter-spacing:0.474px;">Alt+Shift+R</div>
<div class="t" style="top:519.65px;font-size:15.7px;line-height:19.62px;color:#1b1b1b;left:670.3px;letter-spacing:0.007px;">Change Package Assignment</div>
<div class="t" style="top:546.35px;font-size:15.7px;line-height:19.62px;color:#1b1b1b;left:670.3px;letter-spacing:-0.084px;">Quick Fix</div>
<div class="t" style="top:546.35px;font-size:15.7px;line-height:19.62px;color:#1b1b1b;right:73.84px;letter-spacing:0.561px;">Ctrl+1</div>
<div class="t" style="top:574.45px;font-size:15.7px;line-height:19.62px;color:#1b1b1b;left:670.3px;letter-spacing:-0.008px;">Source Code</div>
<div class="t" style="top:574.45px;font-size:15.7px;line-height:19.62px;color:#1b1b1b;right:73.93px;letter-spacing:0.472px;">Alt+Shift+S</div>
<svg class="a" style="left:1170px;top:578.3px" width="7" height="11" viewBox="0 0 7 11"><path d="M1 1 L5.5 5.5 L1 10" stroke="#444" stroke-width="1.3" fill="none"/></svg>
<div class="t" style="top:606.95px;font-size:15.7px;line-height:19.62px;color:#1b1b1b;left:670.3px;letter-spacing:0.212px;">Activate</div>
<div class="t" style="top:606.95px;font-size:15.7px;line-height:19.62px;color:#1b1b1b;right:74.20px;letter-spacing:0.204px;">Ctrl+F3</div>
<div class="t" style="top:630.95px;font-size:15.7px;line-height:19.62px;color:#858585;left:670.3px;letter-spacing:0.135px;">Toggle between Active and Inactive Version</div>
<div class="t" style="top:655.45px;font-size:15.7px;line-height:19.62px;color:#858585;left:670.3px;letter-spacing:0.289px;">Unlock</div>
<div class="t" style="top:655.45px;font-size:15.7px;line-height:19.62px;color:#858585;right:74.08px;letter-spacing:0.322px;">Ctrl+U</div>
<div class="t" style="top:686.15px;font-size:15.7px;line-height:19.62px;color:#1b1b1b;left:670.3px;letter-spacing:-0.090px;">Share Link for Selection...</div>
<div class="t" style="top:717.15px;font-size:15.7px;line-height:19.62px;color:#1b1b1b;left:670.3px;letter-spacing:0.077px;">Coverage As</div>
<svg class="a" style="left:1170px;top:721.0px" width="7" height="11" viewBox="0 0 7 11"><path d="M1 1 L5.5 5.5 L1 10" stroke="#444" stroke-width="1.3" fill="none"/></svg>
<div class="t" style="top:742.95px;font-size:15.7px;line-height:19.62px;color:#1b1b1b;left:670.3px;letter-spacing:0.077px;">Coverage As</div>
<svg class="a" style="left:1170px;top:746.8px" width="7" height="11" viewBox="0 0 7 11"><path d="M1 1 L5.5 5.5 L1 10" stroke="#444" stroke-width="1.3" fill="none"/></svg>
<div class="t" style="top:768.85px;font-size:15.7px;line-height:19.62px;color:#1b1b1b;left:670.3px;letter-spacing:-0.016px;">Run As</div>
<svg class="a" style="left:1170px;top:772.7px" width="7" height="11" viewBox="0 0 7 11"><path d="M1 1 L5.5 5.5 L1 10" stroke="#444" stroke-width="1.3" fill="none"/></svg>
<div class="t" style="top:793.35px;font-size:15.7px;line-height:19.62px;color:#1b1b1b;left:670.3px;letter-spacing:0.524px;">Debug As</div>
<svg class="a" style="left:1170px;top:797.2px" width="7" height="11" viewBox="0 0 7 11"><path d="M1 1 L5.5 5.5 L1 10" stroke="#444" stroke-width="1.3" fill="none"/></svg>
<div class="t" style="top:818.65px;font-size:15.7px;line-height:19.62px;color:#1b1b1b;left:670.3px;letter-spacing:0.182px;">Profile As</div>
<svg class="a" style="left:1170px;top:822.5px" width="7" height="11" viewBox="0 0 7 11"><path d="M1 1 L5.5 5.5 L1 10" stroke="#444" stroke-width="1.3" fill="none"/></svg>
<svg class="a" style="left:643px;top:4.800000000000001px" width="16" height="16" viewBox="0 0 16 16"><path d="M14 2 Q12 0 9 1 L4 4 L2 2 L1 9 L8 9 L6 7 L10 5 Q13 4 14 6 Z" fill="#ececec" stroke="#c9c9c9" stroke-width="1"/></svg>
<svg class="a" style="left:643px;top:56.7px" width="16" height="16" viewBox="0 0 16 16"><rect x="1.5" y="1.5" width="13" height="13" fill="#f4f4f4" stroke="#cdcdcd"/><rect x="4" y="1.5" width="8" height="5" fill="#fff" stroke="#d0d0d0"/><rect x="5" y="9.5" width="6" height="5" fill="#e0e0e0" stroke="#cdcdcd"/></svg>
<svg class="a" style="left:643px;top:85.3px" width="16" height="16" viewBox="0 0 16 16"><circle cx="3.5" cy="3" r="1.8" fill="#8fd08f" stroke="#3a9a4a"/><circle cx="8" cy="8" r="1.8" fill="#8fd08f" stroke="#3a9a4a"/><circle cx="8" cy="12.5" r="1.8" fill="#8fd08f" stroke="#3a9a4a"/><path d="M3.5 5 V13.5 M3.5 8 H6 M3.5 12.5 H6" stroke="#555" stroke-width="1" fill="none"/></svg>
<svg class="a" style="left:643px;top:195.1px" width="16" height="16" viewBox="0 0 16 16"><path d="M1 4 L5 1.5 L12 8 L8 12.5 L1 6.5 Z" fill="#2a86d6"/><circle cx="4" cy="4.5" r="1" fill="#fff"/><rect x="8" y="9" width="7" height="6" rx="1" fill="#e8f0f8" stroke="#9ab" stroke-width=".6"/><path d="M9.5 12 L11 13.5 L13.5 10.5" stroke="#2a86d6" stroke-width="1.1" fill="none"/></svg>
<svg class="a" style="left:643px;top:365.8px" width="16" height="16" viewBox="0 0 16 16"><path d="M12 3 L4 11 M7 4 L13 12" stroke="#b8b8b8" stroke-width="1.3"/><circle cx="3.5" cy="12" r="2" fill="none" stroke="#bbb"/><circle cx="13" cy="3" r="1" fill="#ccc"/></svg>
<svg class="a" style="left:643px;top:390.9px" width="16" height="16" viewBox="0 0 16 16"><rect x="2.5" y="1.5" width="9" height="11" fill="#f5f5f5" stroke="#cfcfcf"/><rect x="5.5" y="4.5" width="9" height="11" fill="#f5f5f5" stroke="#cfcfcf"/><path d="M7 8 H13 M7 10 H13 M7 12 H13" stroke="#d8d8d8"/></svg>
<svg class="a" style="left:643px;top:413.9px" width="16" height="16" viewBox="0 0 16 16"><rect x="1.5" y="3" width="10" height="12" rx="1" fill="#e5b56a" stroke="#b5853a"/><rect x="4" y="1.5" width="5" height="3" fill="#999"/><rect x="6.5" y="6.5" width="8" height="9" fill="#f4f4f4" stroke="#9aa"/><path d="M8 9 H13 M8 11 H13 M8 13 H13" stroke="#8aa"/></svg>
<svg class="a" style="left:643px;top:445.1px" width="16" height="16" viewBox="0 0 16 16"><path d="M6 3 H13 M2 8 H13 M6 13 H13 M4.5 8 L6 3 M4.5 8 L6 13" stroke="#4a6aa8" stroke-width="1.2" fill="none"/><path d="M11 1.5 L14 3 L11 4.5 Z M11 6.5 L14 8 L11 9.5 Z M11 11.5 L14 13 L11 14.5 Z" fill="#4a6aa8"/></svg>
<svg class="a" style="left:643px;top:469.4px" width="16" height="16" viewBox="0 0 16 16"><path d="M1 1 H8 L1 8 Z" fill="#2a86d6"/><path d="M15 3 L6 12 L4 10 L13 1 Z" fill="#e8c862" stroke="#b89a3a" stroke-width=".6"/><path d="M4 10 L1 14 L6 12 Z" fill="#f5f0b0"/><circle cx="9" cy="7" r="1.2" fill="#666"/></svg>
<svg class="a" style="left:643px;top:521px" width="16" height="16" viewBox="0 0 16 16"><path d="M2 3 H11 M2 6.5 H11 M2 10 H11 M4 1 V12 M8 1 V12" stroke="#c08040" stroke-width="1.6"/><path d="M8 11 H12 V9 L15 12.5 L12 16 V14 H8 Z" fill="#3a8ad6"/></svg>
<svg class="a" style="left:643px;top:608.3px" width="16" height="16" viewBox="0 0 16 16"><path d="M8 0 V4 M3 2 L6.5 5 M13 2 L9.5 5 M2 7 H6 M14 7 H10" stroke="#f0b040" stroke-width="1.2"/><rect x="6.5" y="5.5" width="3" height="10" fill="#5a7ac0"/><rect x="7.3" y="5.5" width="1.4" height="10" fill="#b8cce8"/></svg>
<svg class="a" style="left:643px;top:632.3px" width="16" height="16" viewBox="0 0 16 16"><circle cx="4" cy="3.5" r="2.3" fill="none" stroke="#bdbdbd"/><path d="M11 9 L14 12 L11 15 L8 12 Z" fill="none" stroke="#bdbdbd"/><path d="M7 3 Q13 3 13 7 M2.5 7 Q2.5 12 6.5 12.5" stroke="#c5c5c5" fill="none"/></svg>
<svg class="a" style="left:643px;top:656.8px" width="16" height="16" viewBox="0 0 16 16"><path d="M4 8 V5 A4 4 0 0 1 12 5 V8" stroke="#c0c0c0" stroke-width="1.3" fill="none"/><rect x="1.5" y="8" width="13" height="7" rx="2" fill="#ececec" stroke="#bdbdbd"/><rect x="4" y="10.5" width="8" height="2" rx="1" fill="#aaa"/></svg>
<svg class="a" style="left:643px;top:687.5px" width="16" height="16" viewBox="0 0 16 16"><path d="M2 11 L7 6 M5 11 L10 6" stroke="#7a8aa8" stroke-width="1.4"/><circle cx="11" cy="10.5" r=".8" fill="#999"/><circle cx="14" cy="10.5" r=".8" fill="#999"/></svg>
<svg class="a" style="left:643px;top:718.5px" width="16" height="16" viewBox="0 0 16 16"><circle cx="6.5" cy="6" r="5.6" fill="#3a9a44"/><path d="M4.8 3.2 L9.5 6 L4.8 8.8 Z" fill="#fff"/><rect x="7" y="9" width="9" height="5" fill="#b02020"/><rect x="7" y="9" width="4" height="5" fill="#2a8a3a"/></svg>
<svg class="a" style="left:643px;top:770.2px" width="16" height="16" viewBox="0 0 16 16"><circle cx="7" cy="7.5" r="6.5" fill="#2e8b3a"/><circle cx="7" cy="7" r="5.5" fill="#4aac4a"/><path d="M5 3.8 L10.5 7.5 L5 11.2 Z" fill="#fff"/></svg>
<svg class="a" style="left:643px;top:794.7px" width="16" height="16" viewBox="0 0 16 16"><ellipse cx="8" cy="8.5" rx="3.8" ry="4.8" fill="#9ccca8" stroke="#3f7a57" stroke-width="1"/><path d="M3.5 3 L5.5 5 M12.5 3 L10.5 5 M1 8 H4 M12 8 H15 M1.5 14 L4.5 11.5 M14.5 14 L11.5 11.5 M6.5 1 L7 4 M9.5 1 L9 4" stroke="#3f7a57" stroke-width="1.1"/></svg>
</body></html>
